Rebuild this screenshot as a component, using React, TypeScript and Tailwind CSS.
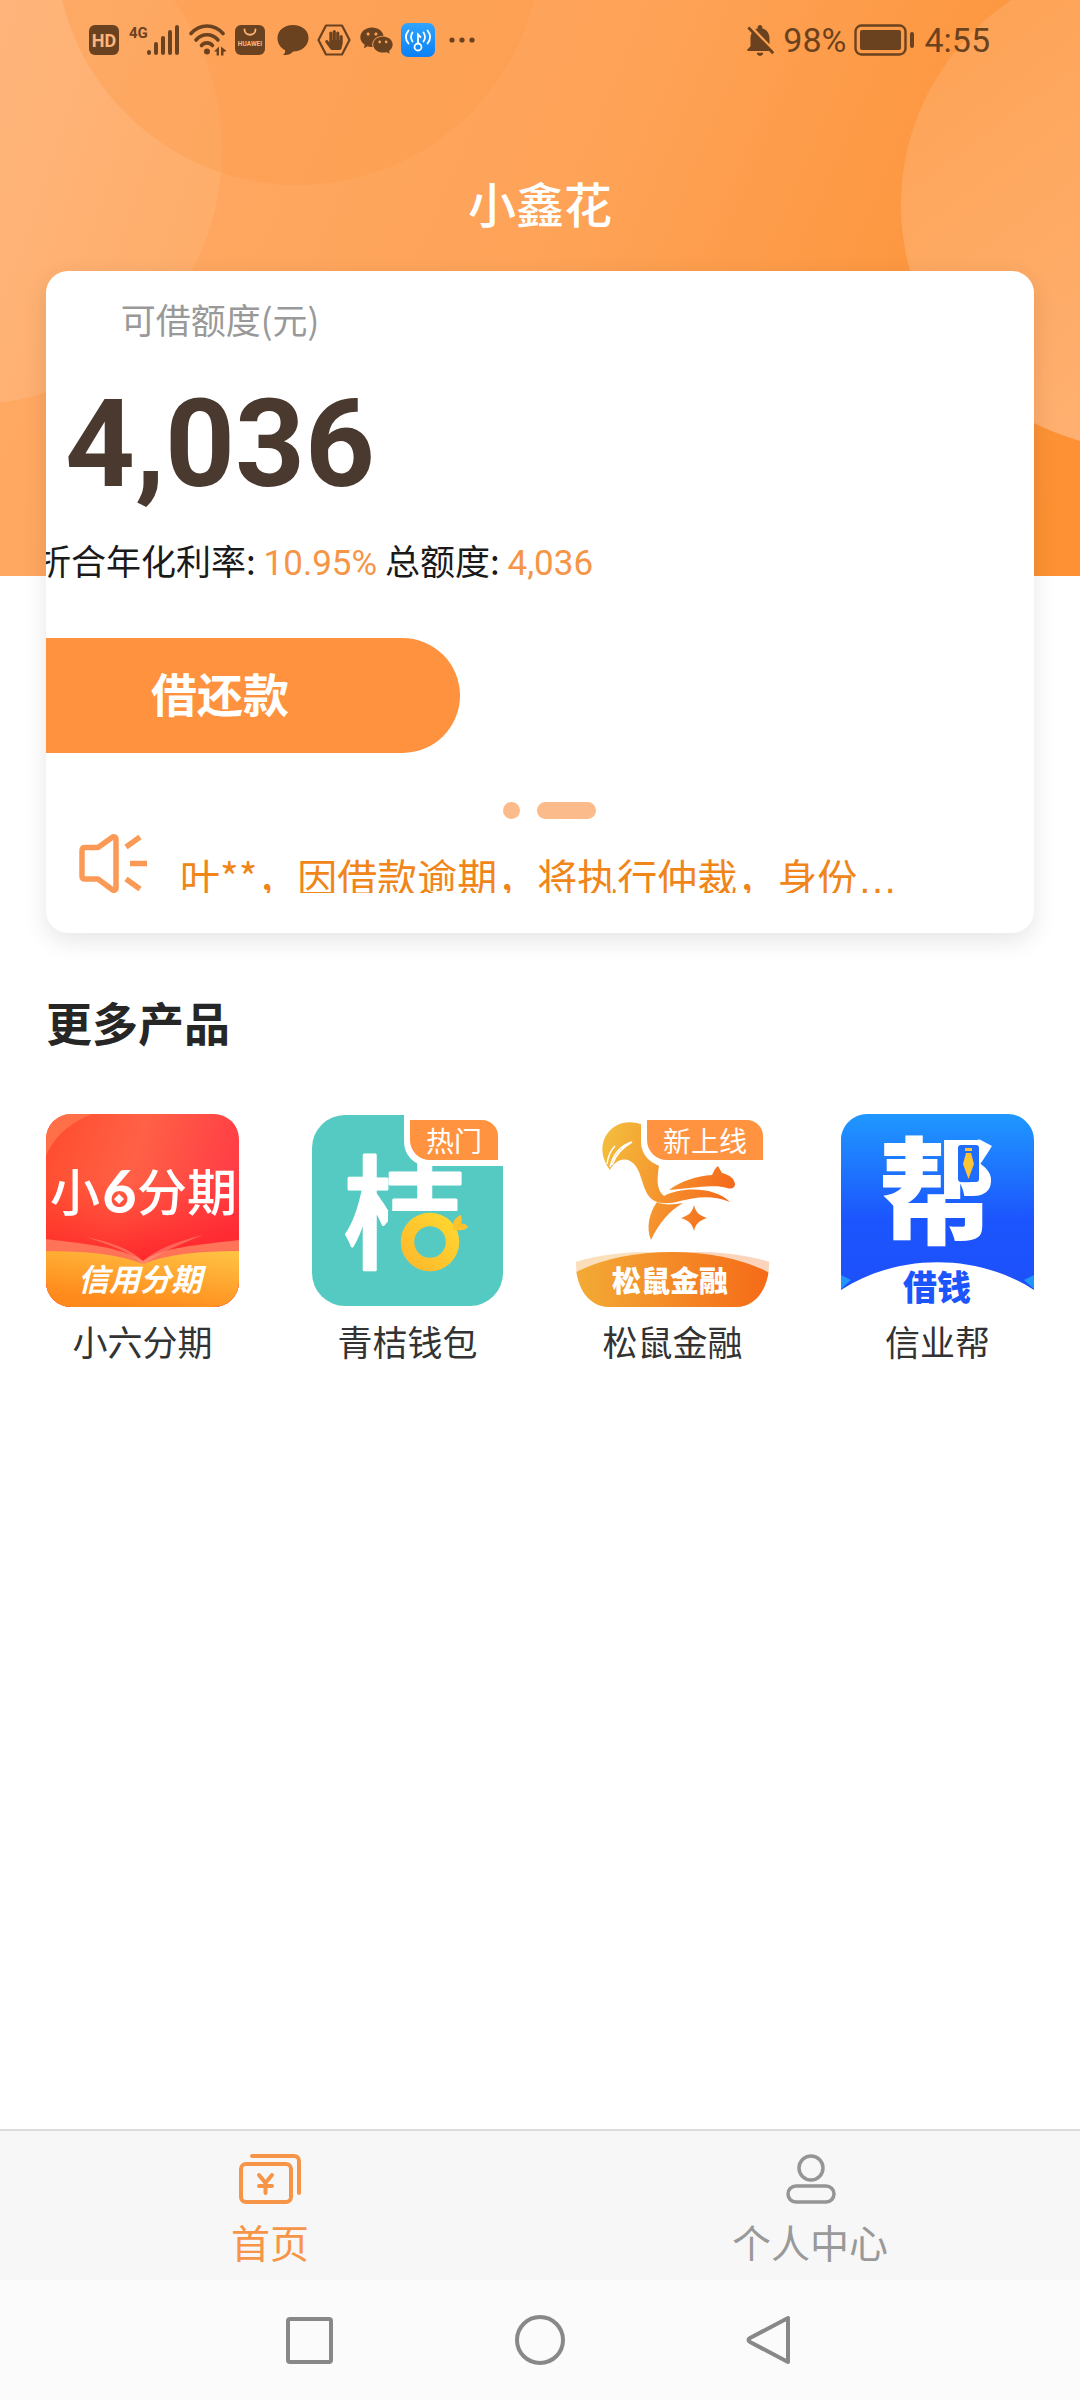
import type { ReactNode } from "react";
import { AiFillWechat } from "react-icons/ai";
import { FaHandPaper } from "react-icons/fa";
import { MdNotificationsOff } from "react-icons/md";

const INK = "#6b421f";

function HeaderBackdrop() {
  return (
    <svg
      className="absolute inset-x-0 top-0 h-[576px] w-full"
      viewBox="0 0 1080 576"
      preserveAspectRatio="none"
      aria-hidden="true"
    >
      <defs>
        <linearGradient id="sky" gradientUnits="userSpaceOnUse" x1="0" y1="100" x2="1080" y2="560">
          <stop offset="0" stopColor="#ffaa66" />
          <stop offset="0.47" stopColor="#fea358" />
          <stop offset="0.72" stopColor="#fd9944" />
          <stop offset="0.96" stopColor="#fd9133" />
        </linearGradient>
        <linearGradient id="leftDisc" x1="0.1" y1="0.3" x2="1" y2="0.6">
          <stop offset="0" stopColor="#ffbb88" />
          <stop offset="1" stopColor="#fead6a" />
        </linearGradient>
        <linearGradient id="rightDisc" x1="0" y1="0.2" x2="0.6" y2="1">
          <stop offset="0" stopColor="#fda356" />
          <stop offset="1" stopColor="#ffb275" />
        </linearGradient>
      </defs>
      <rect width="1080" height="576" fill="url(#sky)" />
      <circle cx="-33" cy="150" r="255" fill="url(#leftDisc)" />
      <circle cx="298" cy="-58" r="243" fill="#fc9a4a" fillOpacity="0.4" />
      <circle cx="1146" cy="205" r="245" fill="url(#rightDisc)" />
    </svg>
  );
}

function StatusBar() {
  return (
    <div className="relative flex h-20 items-center justify-between pl-[89px] pr-[90px] text-[#6b421f]">
      <div className="flex items-center">
        <svg className="h-[30px] w-[30px]" viewBox="0 0 30 30" aria-label="HD">
          <rect width="30" height="30" rx="6" fill={INK} />
          <text x="15" y="21.500" textAnchor="middle" fontFamily="Roboto" fontWeight="700" fontSize="18" fill="#fdb57c">
            HD
          </text>
        </svg>
        <svg className="ml-2.5 h-8 w-[52px]" viewBox="0 0 52 32" aria-label="4G">
          <text x="0" y="14" fontFamily="Roboto" fontWeight="700" fontSize="15" fill={INK}>
            4G
          </text>
          <g stroke={INK} strokeWidth="4" strokeLinecap="round">
            <path d="M20 29v-1M27 29V20M34 29V14M41 29V8M48 29V3" />
          </g>
        </svg>
        <svg className="ml-2 h-8 w-[38px]" viewBox="0 0 38 32" aria-label="Wi-Fi">
          <g fill="none" stroke={INK} strokeWidth="3.600" strokeLinecap="round">
            <path d="M2 9.500C11-.5 25-.5 34 9.500" />
            <path d="M7 16c6-7 16-7 22 0" />
            <path d="M12.500 21.500c3-3.500 8-3.500 11 0" />
          </g>
          <circle cx="18" cy="27.500" r="3" fill={INK} />
          <path d="M25 27.500l5-5v9h-2.400v-4zM32 22.500l5.500 4.500-3 1v3.500H32z" fill={INK} />
        </svg>
        <svg className="ml-2 h-[30px] w-[30px]" viewBox="0 0 30 30" aria-label="HUAWEI">
          <rect width="30" height="30" rx="6" fill={INK} />
          <path d="M9.500 4.500c0 7 11 7 11 0" fill="none" stroke="#fdb57c" strokeWidth="1.800" strokeLinecap="round" />
          <text x="15" y="20.500" textAnchor="middle" fontFamily="Roboto" fontWeight="700" fontSize="6.500" fill="#fdb57c">
            HUAWEI
          </text>
        </svg>
        <svg className="ml-3 h-[30px] w-8" viewBox="0 0 32 30" aria-label="消息">
          <path d="M16 0c9 0 15.500 5.500 15.500 13S25 26.500 16 26.500c-2 3-6 3.500-10 3.500 2-1.500 2.500-3 2-5C3.500 23 .5 18.500.5 13 .5 5.500 7 0 16 0z" fill={INK} />
        </svg>
        <div className="relative ml-2 flex h-8 w-[34px] items-center justify-center">
          <svg className="absolute inset-0 h-8 w-[34px]" viewBox="0 0 34 32" aria-hidden="true">
            <path d="M9 1.500h16L32.500 16 25 30.500H9L1.500 16z" fill="none" stroke={INK} strokeWidth="2.200" strokeLinejoin="round" />
          </svg>
          <FaHandPaper size={20} />
        </div>
        <AiFillWechat className="ml-[7px]" size={37} />
        <svg className="ml-1.5 h-[34px] w-[34px]" viewBox="0 0 34 34" aria-label="热点">
          <defs>
            <linearGradient id="hotspot" x1="0" y1="0" x2="0" y2="1">
              <stop offset="0" stopColor="#2fa4ff" />
              <stop offset="1" stopColor="#0a80f5" />
            </linearGradient>
          </defs>
          <rect width="34" height="34" rx="7" fill="url(#hotspot)" />
          <g fill="none" stroke="#fff" strokeWidth="1.800" strokeLinecap="round">
            <circle cx="17" cy="24" r="3.500" />
            <path d="M17 20.500v-9l2.500 2.500" />
            <path d="M11.500 9.500c-2 3-2 6 0 9M7.500 7.500c-3.200 4-3.200 9 0 13M22.500 9.500c2 3 2 6 0 9M26.500 7.500c3.200 4 3.200 9 0 13" />
          </g>
        </svg>
        <svg className="ml-3.5 h-1.5 w-[26px]" viewBox="0 0 26 6" aria-hidden="true">
          <g fill={INK}>
            <circle cx="3" cy="3" r="2.600" />
            <circle cx="13" cy="3" r="2.600" />
            <circle cx="23" cy="3" r="2.600" />
          </g>
        </svg>
      </div>
      <div className="flex items-center font-[Roboto,sans-serif] text-[34px] leading-10">
        <MdNotificationsOff size={38} />
        <span className="ml-1">98%</span>
        <svg className="ml-2 h-8 w-[62px]" viewBox="0 0 62 32" aria-label="电量">
          <rect x="1.500" y="1.500" width="50" height="29" rx="6" fill="none" stroke={INK} strokeWidth="2.400" />
          <rect x="6" y="6" width="41" height="20" rx="2" fill={INK} />
          <rect x="56" y="8" width="4" height="16" rx="2" fill={INK} />
        </svg>
        <span className="ml-2">4:55</span>
      </div>
    </div>
  );
}

function SpeakerIcon() {
  return (
    <svg className="h-[59px] w-[69px] shrink-0" viewBox="0 0 69 59" aria-hidden="true">
      <g fill="none" stroke="#fb9a56" strokeWidth="5.500" strokeLinejoin="round">
        <path d="M6 13.500h13L33 3.500c2-1.500 4-.5 4 2v48c0 2.500-2 3.500-4 2L19 45H6c-2 0-3-1-3-3V16.500c0-2 1-3 3-3z" />
        <path d="M47 13l14-10M51 29.500h17M47 45l14 10" />
      </g>
    </svg>
  );
}

function XiaoliuIcon() {
  return (
    <svg className="h-full w-full" viewBox="0 0 193 193" aria-hidden="true">
      <defs>
        <clipPath id="xlClip"><rect width="193" height="193" rx="25" /></clipPath>
        <linearGradient id="xlRed" x1="0" y1="0.1" x2="1" y2="0.4">
          <stop offset="0" stopColor="#ff4c2e" />
          <stop offset="0.45" stopColor="#ff6146" />
          <stop offset="1" stopColor="#ff3a45" />
        </linearGradient>
        <linearGradient id="xlShade" x1="0" y1="0" x2="0" y2="1">
          <stop offset="0.35" stopColor="#ff2020" stopOpacity="0" />
          <stop offset="0.8" stopColor="#ff1c26" stopOpacity="0.85" />
        </linearGradient>
        <linearGradient id="xlGold" x1="1" y1="0" x2="0.5" y2="1">
          <stop offset="0" stopColor="#ffc444" />
          <stop offset="1" stopColor="#ff8a1c" />
        </linearGradient>
      </defs>
      <g clipPath="url(#xlClip)">
        <rect width="193" height="193" fill="url(#xlRed)" />
        <path d="M0 0h46C22 10 9 22 0 42z" fill="#ff7048" />
        <rect width="193" height="193" fill="url(#xlShade)" />
        <path d="M0 125c40 5 75 8 97 22 20-14 55-16 96-21v30H0z" fill="#ff7358" />
        <path d="M40 123c25 5 45 12 57 24 14-12 35-20 60-26-22 9-42 17-60 30-14-14-33-20-57-28z" fill="#ff9a80" fillOpacity="0.5" />
        <path d="M0 137c40 0 72 3 97 13 25-10 57-13 96-13v56H0z" fill="url(#xlGold)" />
      </g>
      <g fill="#fff">
        <text x="4" y="97" fontFamily="'Noto Sans CJK SC'" fontWeight="500" fontSize="50">小</text>
        <text x="56" y="99" fontFamily="Lato" fontWeight="700" fontSize="60">6</text>
        <text x="91" y="97" fontFamily="'Noto Sans CJK SC'" fontWeight="500" fontSize="50">分期</text>
        <text x="94" y="177" textAnchor="middle" fontFamily="'Noto Sans CJK SC'" fontWeight="700" fontStyle="italic" fontSize="31">信用分期</text>
      </g>
      <path d="M73 80l5 5-5 5-5-5z" fill="#fff" />
    </svg>
  );
}

function QingjuIcon() {
  return (
    <svg className="h-full w-full" viewBox="0 0 193 193" aria-hidden="true">
      <defs>
        <clipPath id="qjKeep"><path d="M25 20H165V97H77V170H25z" /></clipPath>
        <linearGradient id="qjRing" x1="1" y1="0" x2="0" y2="1">
          <stop offset="0" stopColor="#ffd62f" />
          <stop offset="1" stopColor="#fdb92c" />
        </linearGradient>
      </defs>
      <rect x="1" y="1" width="191" height="191" rx="33" fill="#55cac3" />
      <text
        x="32"
        y="145"
        clipPath="url(#qjKeep)"
        fontFamily="'Noto Sans CJK SC'"
        fontWeight="500"
        fontSize="123"
        fill="#fff"
        stroke="#fff"
        strokeWidth="3"
        strokeLinejoin="round"
      >
        桔
      </text>
      <circle cx="119" cy="128" r="22.500" fill="none" stroke="url(#qjRing)" strokeWidth="13.500" />
      <path d="M142 115c-1-8 3-12 8-14 1 4 1 6 0 9 3-1 5 0 7 3-3 4-10 4-15 2z" fill="#ffc12c" />
    </svg>
  );
}

function SongshuIcon() {
  return (
    <svg className="h-full w-full" viewBox="0 0 193 193" aria-hidden="true">
      <defs>
        <linearGradient id="ssFlow" gradientUnits="userSpaceOnUse" x1="27" y1="40" x2="160" y2="80">
          <stop offset="0" stopColor="#f3bb3c" />
          <stop offset="0.5" stopColor="#f5922d" />
          <stop offset="1" stopColor="#f5651a" />
        </linearGradient>
        <linearGradient id="ssBase" x1="0" y1="0" x2="1" y2="0">
          <stop offset="0" stopColor="#f2b83a" />
          <stop offset="0.5" stopColor="#f48a27" />
          <stop offset="1" stopColor="#f65f12" />
        </linearGradient>
        <clipPath id="ssClip"><path d="M0 130H193V150C193 176 178 193 160 193H33C15 193 0 176 0 150z" /></clipPath>
      </defs>
      <g fill="url(#ssFlow)">
        <path d="M34 56C22 40 25 22 38 13 48 6 60 8 67 11c-1 20 3 33 16 41-2 12-3 24 5 30 16-9 50-10 66 6-20-8-36-4-50-1-14 4-26 3-32-6-8-14-7-28-18-34-8-4-16 1-20 9z" />
        <path d="M93 76c12-9 28-14 43-15 2-4 3-7 6-9l4 7c8 2 13 6 13 12-1 4-5 4-8 3-10-3-20-2-58 2z" />
        <path d="M81 88c8 4 18 2 26 1-14 8-24 20-32 37-5-12-2-27 6-38z" />
        <path d="M118 91c2 8 5 10 13 13-8 3-11 5-13 13-2-8-5-10-13-13 8-3 11-5 13-13z" />
      </g>
      <path d="M34 53c3-12 9-21 22-25-10 6-16 12-20 23M31 50c1-8 3-13 8-18" fill="none" stroke="#fff" strokeWidth="1.500" />
      <g clipPath="url(#ssClip)">
        <ellipse cx="70" cy="200" rx="130" ry="62" fill="#f9c98c" fillOpacity="0.6" />
        <ellipse cx="123" cy="200" rx="130" ry="62" fill="#f9a878" fillOpacity="0.5" />
        <ellipse cx="96" cy="202" rx="132" ry="64" fill="url(#ssBase)" />
      </g>
      <text x="94" y="178" textAnchor="middle" fontFamily="'Noto Sans CJK SC'" fontWeight="900" fontSize="29" fill="#fff">
        松鼠金融
      </text>
    </svg>
  );
}

function XinyeIcon() {
  return (
    <svg className="h-full w-full" viewBox="0 0 193 193" aria-hidden="true">
      <defs>
        <linearGradient id="xyBlue" x1="0" y1="0" x2="0" y2="1">
          <stop offset="0" stopColor="#1f98ff" />
          <stop offset="0.6" stopColor="#1c55fd" />
          <stop offset="1" stopColor="#1c50fa" />
        </linearGradient>
      </defs>
      <path d="M0 26C0 12 12 0 26 0H167C181 0 193 12 193 26V176C136 139 57 139 0 176z" fill="url(#xyBlue)" />
      <path d="M0 161l10 5L0 175zM193 161l-10 5 10 9z" fill="#2196fa" />
      <text x="96" y="121" textAnchor="middle" fontFamily="'Noto Sans CJK SC'" fontWeight="900" fontSize="116" fill="#fff">
        帮
      </text>
      <rect x="117" y="31" width="21" height="37" rx="3" fill="#1f6cfd" />
      <path d="M124 34h7v3h-7zM125 39h5l3 11-5.500 15L122 50z" fill="#fdc436" />
      <text x="96" y="186" textAnchor="middle" fontFamily="'Noto Sans CJK SC'" fontWeight="900" fontSize="34" fill="#1c55fb">
        借钱
      </text>
    </svg>
  );
}

function Badge({ children }: { children: ReactNode }) {
  return (
    <span className="absolute right-0 top-0 rounded-bl-[24px] bg-white pb-1.5 pl-1.5 pr-1.5 pt-1.5">
      <span className="block rounded-bl-[20px] rounded-tr-[16px] bg-[#ff9340] px-4 text-[28px] leading-10 text-white">
        {children}
      </span>
    </span>
  );
}

type Product = { name: string; icon: ReactNode; badge?: string };

const products: Product[] = [
  { name: "小六分期", icon: <XiaoliuIcon /> },
  { name: "青桔钱包", icon: <QingjuIcon />, badge: "热门" },
  { name: "松鼠金融", icon: <SongshuIcon />, badge: "新上线" },
  { name: "信业帮", icon: <XinyeIcon /> },
];

export default function App() {
  return (
    <div className="relative flex min-h-screen flex-col bg-white font-['Noto_Sans_CJK_SC',sans-serif] text-[#262626]">
      <HeaderBackdrop />
      <StatusBar />
      <h1 className="relative mt-14 flex h-[135px] items-center justify-center pb-1 text-5xl font-medium text-white">小鑫花</h1>

      <main className="relative flex-1 px-[46px]">
        <section className="overflow-hidden rounded-[22px] bg-white pb-10 pt-7 shadow-[0_8px_24px_rgba(0,0,0,0.1)]">
          <div className="-ml-[66px] flex w-[480px] flex-col items-center">
            <p className="text-[35px] leading-10 text-[#999999]">可借额度(元)</p>
            <p className="mt-[46px] font-[Roboto,sans-serif] text-[122px] font-bold leading-[120px] text-[#49392e]">4,036</p>
            <p className="mt-[35px] self-start whitespace-nowrap pl-14 text-[35px] leading-10 text-[#1a1a1a]">
              折合年化利率: <span className="font-[Roboto,sans-serif] text-[#f69547]">10.95%</span> 总额度:{" "}
              <span className="font-[Roboto,sans-serif] text-[#f69547]">4,036</span>
            </p>
            <button type="button" className="mt-[54px] h-[115px] w-full rounded-full bg-[#ff923e] pb-1.5 text-[46px] font-bold text-white">
              借还款
            </button>
          </div>
          <div className="mt-[49px] flex justify-center gap-[17px] pl-[18px]">
            <span className="h-[17px] w-[17px] rounded-full bg-[#fcbb8b]" />
            <span className="h-[17px] w-[59px] rounded-full bg-[#fcbb8b]" />
          </div>
          <div className="mt-[15px] flex h-[59px] gap-8 overflow-hidden pl-[33px] pr-10">
            <SpeakerIcon />
            <p className="mt-3 whitespace-nowrap text-[40px] leading-[60px] text-[#f08519]">
              叶**，因借款逾期，将执行仲裁，身份<span className="font-['Liberation_Sans',sans-serif]">…</span>
            </p>
          </div>
        </section>

        <h2 className="mt-15 text-[46px] font-bold leading-[56px]">更多产品</h2>
        <ul className="mt-[65px] flex justify-between">
          {products.map((product) => (
            <li key={product.name} className="w-[193px]">
              <a href="#" className="block">
                <span className="relative block h-[193px]">
                  {product.icon}
                  {product.badge && <Badge>{product.badge}</Badge>}
                </span>
                <span className="mt-3.5 block text-center text-[35px] leading-10 text-[#333333]">{product.name}</span>
              </a>
            </li>
          ))}
        </ul>
      </main>

      <nav className="flex h-[151px] border-t-2 border-[#dcdcdc] bg-[#f7f7f7]">
        <a href="#" className="flex flex-1 flex-col items-center pt-[23px] text-[39px] leading-10 text-[#f69547]">
          <svg className="h-[50px] w-[62px]" viewBox="0 0 62 50" aria-hidden="true">
            <g fill="none" stroke="#f69547" strokeWidth="4" strokeLinecap="round" strokeLinejoin="round">
              <rect x="2" y="10" width="50" height="38" rx="5" />
              <path d="M13 2h42c3 0 5 2 5 5v32" />
              <path d="M20 21l6.500 8 6.500-8M26.500 29v10M20 32h13" />
            </g>
          </svg>
          <span className="mt-[17px]">首页</span>
        </a>
        <a href="#" className="flex flex-1 flex-col items-center pt-[23px] text-[39px] leading-10 text-[#999999]">
          <svg className="h-[50px] w-[62px]" viewBox="0 0 62 50" aria-hidden="true">
            <g fill="none" stroke="#959595" strokeWidth="3.500">
              <circle cx="32" cy="14" r="12" />
              <rect x="9" y="32" width="46" height="16" rx="8" />
            </g>
          </svg>
          <span className="mt-[17px]">个人中心</span>
        </a>
      </nav>
      <div className="flex h-[120px] items-center justify-center gap-[181px] bg-[#fbfbfb]">
        <button type="button" aria-label="最近任务">
          <svg className="h-[50px] w-[50px]" viewBox="0 0 50 50">
            <rect x="4" y="4" width="43" height="43" rx="2" fill="none" stroke="#888" strokeWidth="4" />
          </svg>
        </button>
        <button type="button" aria-label="主屏幕">
          <svg className="h-[50px] w-[50px]" viewBox="0 0 50 50">
            <circle cx="25" cy="25" r="23" fill="none" stroke="#888" strokeWidth="4" />
          </svg>
        </button>
        <button type="button" aria-label="返回">
          <svg className="h-[50px] w-[50px]" viewBox="0 0 50 50">
            <path d="M42 3v44L4 27c-2-1-2-3 0-4z" fill="none" stroke="#888" strokeWidth="4" strokeLinejoin="round" />
          </svg>
        </button>
      </div>
    </div>
  );
}
